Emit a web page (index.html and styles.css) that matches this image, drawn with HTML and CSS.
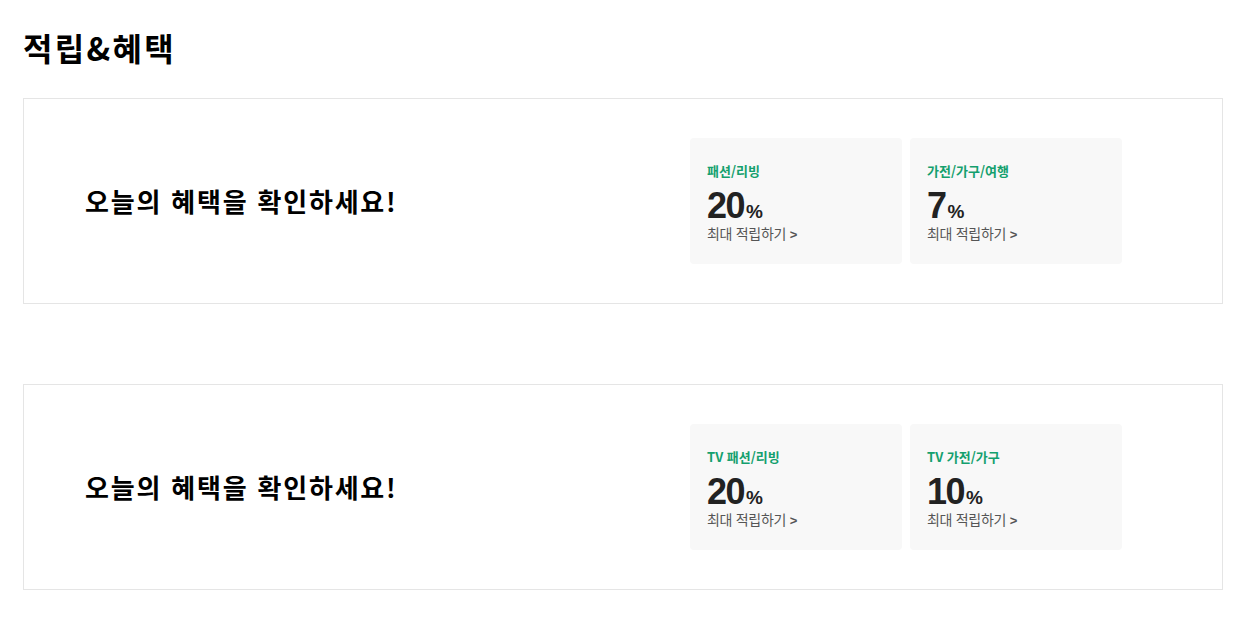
FILE: index.html
```html
<!DOCTYPE html>
<html lang="ko">
<head>
<meta charset="utf-8">
<link rel="stylesheet" href="styles.css">
</head>
<body>
<div class="page">
  <h2 class="title">적립&amp;혜택</h2>
  <section class="box">
    <p class="lead">오늘의 혜택을 확인하세요!</p>
    <div class="cards">
      <a class="card">
        <span class="label">패션/리빙</span>
        <span class="rate"><b>20</b><i>%</i></span>
        <span class="more">최대 적립하기 <em>&gt;</em></span>
      </a>
      <a class="card">
        <span class="label">가전/가구/여행</span>
        <span class="rate"><b>7</b><i>%</i></span>
        <span class="more">최대 적립하기 <em>&gt;</em></span>
      </a>
    </div>
  </section>
  <section class="box">
    <p class="lead">오늘의 혜택을 확인하세요!</p>
    <div class="cards">
      <a class="card">
        <span class="label">TV 패션/리빙</span>
        <span class="rate"><b>20</b><i>%</i></span>
        <span class="more">최대 적립하기 <em>&gt;</em></span>
      </a>
      <a class="card">
        <span class="label">TV 가전/가구</span>
        <span class="rate"><b>10</b><i>%</i></span>
        <span class="more">최대 적립하기 <em>&gt;</em></span>
      </a>
    </div>
  </section>
</div>
</body>
</html>
```
FILE: styles.css
```css
* { box-sizing: border-box; }
html, body { margin: 0; padding: 0; background: #fff; }
body {
  font-family: "Noto Sans CJK KR", "Noto Sans", sans-serif;
  color: #000;
}
.page {
  padding: 26px 0 0 23px;
  width: 1223px;
}
.title {
  margin: 0 0 30px 0;
  font-size: 32px;
  line-height: 42px;
  font-weight: 700;
  letter-spacing: 2.3px;
}
.box {
  display: flex;
  align-items: center;
  justify-content: space-between;
  width: 1200px;
  border: 1px solid #e5e5e5;
  padding: 39px 100px 39px 61px;
  margin-bottom: 80px;
}
.box:last-child { margin-bottom: 0; }
.lead {
  margin: 0;
  font-size: 26px;
  line-height: 36px;
  font-weight: 700;
  letter-spacing: 1.8px;
}
.cards {
  display: flex;
  gap: 8px;
}
.card {
  display: flex;
  flex-direction: column;
  width: 212px;
  height: 126px;
  padding: 24px 17px 0 17px;
  background: #f8f8f8;
  border-radius: 4px;
  color: #222;
  text-decoration: none;
}
.label {
  font-size: 13px;
  line-height: 18px;
  font-weight: 700;
  color: #14a06e;
  letter-spacing: 0;
}
.rate {
  margin-top: 8px;
  font-family: "Liberation Sans", Arial, sans-serif;
  line-height: 35px;
  height: 35px;
  color: #222;
}
.rate b {
  font-size: 36px;
  font-weight: 700;
  letter-spacing: -1.5px;
}
.rate i {
  font-style: normal;
  font-size: 19px;
  font-weight: 700;
  margin-left: 2px;
}
.more {
  font-size: 14px;
  line-height: 20px;
  color: #555;
  letter-spacing: -0.3px;
}
.more em {
  font-style: normal;
  font-family: "Liberation Sans", Arial, sans-serif;
  font-weight: 700;
  font-size: 13px;
}
```
